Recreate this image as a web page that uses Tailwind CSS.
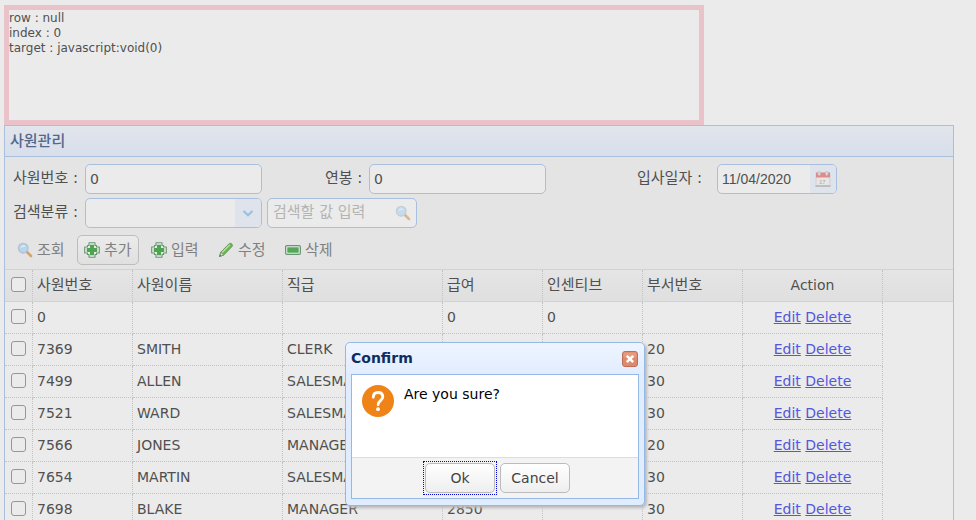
<!DOCTYPE html>
<html lang="ko">
<head>
<meta charset="utf-8">
<meta name="viewport" content="width=device-width, initial-scale=1">
<title>사원관리</title>
<script src="https://cdn.jsdelivr.net/npm/@tailwindcss/browser@4"></script>
</head>
<body class="relative h-screen overflow-hidden bg-[#ebebeb] pl-1 pr-[22px] pt-[5px] font-[family-name:'DejaVu_Sans','Noto_Sans_CJK_KR',sans-serif] text-sm text-[#505050]">

<svg class="hidden" aria-hidden="true">
  <defs>
    <symbol id="search" viewBox="0 0 16 16">
      <path d="M10 10l4 4" stroke="#d8a465" stroke-width="2.6" stroke-linecap="round"/>
      <path d="M9.4 9.4l1.5 1.5" stroke="#aaa" stroke-width="2"/>
      <circle cx="6.2" cy="6.2" r="4.8" fill="#b5d6ed" stroke="#b4bfce" stroke-width="1.3"/>
      <path d="M3.4 5.8a3 3 0 0 1 5.4-1.2c-1.5.2-3.4.6-5.4 1.2z" fill="#dcebf5"/>
    </symbol>
    <symbol id="add" viewBox="0 0 16 16">
      <path d="M5 .7h6v2.8h1.5v1.5h2.8v6h-2.8v1.5H11v2.8H5v-2.8H3.5V11H.7V5h2.8V3.5H5z" fill="#e5eee5" stroke="#689474" stroke-width="1.1" stroke-linejoin="round"/>
      <path d="M6 2.8h4V6h3.2v4H10v3.2H6V10H2.8V6H6z" fill="#4fa452"/>
    </symbol>
    <symbol id="edit" viewBox="0 0 16 16">
      <path d="M1.5 14.5l1.3-4.3 8-8.2c1-1 2.7-.7 3.2.2.6.8.5 1.8-.2 2.5l-8 8.2z" fill="#69bd4f" stroke="#648e64" stroke-width="1"/>
      <path d="M4 10.5l7.7-7.8" stroke="#b7df92" stroke-width="1.4"/>
      <path d="M2.8 10.4l3 2.7-4.3 1.4z" fill="#d8e2ce" stroke="#648e64" stroke-width=".7"/>
      <path d="M1.5 14.5l.6-1.8 1.2 1.1z" fill="#456f4b"/>
    </symbol>
    <symbol id="remove" viewBox="0 0 16 16">
      <rect x=".6" y="3.6" width="14.8" height="8.8" rx="1.3" fill="#e5eee5" stroke="#689474" stroke-width="1.2"/>
      <rect x="2.3" y="5.3" width="11.4" height="5.4" fill="#55a757"/>
    </symbol>
  </defs>
</svg>

<section class="h-[120px] max-w-[700px] border-[5px] border-[#eac3ca] pt-px text-xs leading-[15px]">
  <p>row : null</p>
  <p>index : 0</p>
  <p>target : javascript:void(0)</p>
</section>

<main class="border border-[#a9bfde]">
  <h1 class="flex h-[31px] items-center border-b border-[#a9bfde] bg-linear-to-b from-[#e1e5ec] to-[#d8dfeb] px-[5px] pt-0.5 text-[15px] font-medium text-[#52678b]">사원관리</h1>

  <div class="border-b border-[#d2d2d2] bg-[#e4e4e4] pb-1 pt-[7px]">
    <form>
      <div class="flex items-center pl-2">
        <label for="empno" class="w-[72px] whitespace-nowrap text-[15px]">사원번호 :</label>
        <input id="empno" value="0" class="h-[30px] w-[177px] rounded-[5px] border border-[#a9bfde] bg-[#ebebeb] px-1">
        <label for="sal" class="ml-[63px] w-11 whitespace-nowrap text-[15px]">연봉 :</label>
        <input id="sal" value="0" class="h-[30px] w-[177px] rounded-[5px] border border-[#a9bfde] bg-[#ebebeb] px-1">
        <label for="hired" class="ml-[91px] w-20 whitespace-nowrap text-[15px]">입사일자 :</label>
        <div class="flex h-[30px] w-[120px] overflow-hidden rounded-[5px] border border-[#a9bfde] bg-[#ebebeb]">
          <input id="hired" value="11/04/2020" class="min-w-0 flex-1 px-1 font-[family-name:'Liberation_Sans',sans-serif]">
          <button type="button" aria-label="날짜 선택" class="flex w-[26px] items-center justify-center bg-[#dfe4ec]">
            <svg class="size-4" viewBox="0 0 16 16">
              <rect x="1" y="2" width="14" height="13" fill="#e6e6e6" stroke="#cfcfcf"/>
              <rect x="1" y="1.5" width="14" height="5" fill="#df8b8b"/>
              <path d="M.5 15h15" stroke="#b5b5b5" stroke-width="1.5"/>
              <g fill="#e2dede" stroke="#c2b4b4" stroke-width=".7"><rect x="3" y="0.4" width="2.4" height="4" rx="1.2"/><rect x="10.6" y="0.4" width="2.4" height="4" rx="1.2"/></g>
              <text x="4" y="12.5" class="font-[family-name:'Liberation_Sans',sans-serif] text-[6px]" fill="#aaa">17</text>
            </svg>
          </button>
        </div>
      </div>
      <div class="mt-1 flex items-center pl-2">
        <label for="kind" class="w-[72px] whitespace-nowrap text-[15px]">검색분류 :</label>
        <div class="relative h-[30px] w-[177px] overflow-hidden rounded-[5px] border border-[#a9bfde] bg-[#ebebeb]">
          <select id="kind" class="h-full w-full appearance-none px-1"><option></option></select>
          <span class="pointer-events-none absolute inset-y-0 right-0 flex w-[26px] items-center justify-center bg-[#dfe4ec]">
            <svg class="size-4" viewBox="0 0 16 16"><path d="M3.5 6l4.5 4.3L12.5 6" fill="none" stroke="#94c2df" stroke-width="2.2"/></svg>
          </span>
        </div>
        <div class="ml-[5px] flex h-[30px] w-[150px] items-center rounded-[5px] border border-[#a9bfde] bg-[#ebebeb] pr-[5px]">
          <input aria-label="검색할 값 입력" placeholder="검색할 값 입력" class="min-w-0 flex-1 px-[5px] text-[15px] placeholder:text-[#b4b4b4]">
          <button type="button" aria-label="검색" class="opacity-70"><svg class="size-4"><use href="#search"/></svg></button>
        </div>
      </div>
    </form>
    <div class="mt-[7px] flex gap-1 pl-[6px] text-[15px] text-[#808080]">
      <button class="flex h-[30px] w-[62px] items-center gap-1 rounded-[5px] border border-transparent px-[5px]"><svg class="size-4 shrink-0"><use href="#search"/></svg><span class="whitespace-nowrap pt-0.5">조회</span></button>
      <button class="flex h-[30px] w-[62px] items-center gap-1 rounded-[5px] border border-[#bdbdbd] bg-linear-to-b from-[#ebebeb] to-[#e0e0e0] px-[6px]"><svg class="size-4 shrink-0"><use href="#add"/></svg><span class="whitespace-nowrap pt-0.5">추가</span></button>
      <button class="flex h-[30px] w-16 items-center gap-1 rounded-[5px] border border-transparent px-[7px]"><svg class="size-4 shrink-0"><use href="#add"/></svg><span class="whitespace-nowrap pt-0.5">입력</span></button>
      <button class="flex h-[30px] w-[62px] items-center gap-1 rounded-[5px] border border-transparent px-[6px]"><svg class="size-4 shrink-0"><use href="#edit"/></svg><span class="whitespace-nowrap pt-0.5">수정</span></button>
      <button class="flex h-[30px] w-16 items-center gap-1 rounded-[5px] border border-transparent px-[7px]"><svg class="size-4 shrink-0"><use href="#remove"/></svg><span class="whitespace-nowrap pt-0.5">삭제</span></button>
    </div>
  </div>

  <table class="w-full table-fixed border-separate border-spacing-0 text-left">
    <colgroup>
      <col class="w-7"><col class="w-[100px]"><col class="w-[150px]"><col class="w-[160px]"><col class="w-[100px]"><col class="w-[100px]"><col class="w-[100px]"><col class="w-[140px]"><col>
    </colgroup>
    <thead class="bg-linear-to-b from-[#e5e5e5] to-[#dfdfdf] text-[15px] [&_th]:h-8 [&_th]:border-b [&_th]:border-b-[#d2d2d2] [&_th]:px-1 [&_th]:font-normal [&_th:not(:last-child)]:border-r [&_th:not(:last-child)]:[border-right-style:dotted] [&_th:not(:last-child)]:border-r-[#c3c3c3]">
      <tr>
        <th class="pb-0.5"><input type="checkbox" aria-label="전체 선택" class="ml-[2px] block size-[15px] appearance-none rounded-[3px] border border-[#969696] bg-[#ebebeb]"></th>
        <th>사원번호</th><th>사원이름</th><th>직급</th><th>급여</th><th>인센티브</th><th>부서번호</th><th class="pb-0.5 text-center text-sm">Action</th><th></th>
      </tr>
    </thead>
    <tbody id="rows"></tbody>
  </table>
</main>

<div role="dialog" aria-labelledby="dlg-title" class="absolute left-[345px] top-[342px] w-[300px] rounded-[5px] border border-[#95b8e7] bg-linear-to-b from-[#eff5ff] to-[#e0ecff] to-20% px-[5px] pb-[6px] shadow-[2px_2px_3px_#b8b8b8]">
  <div class="flex h-[31px] items-center justify-between pr-px">
    <h2 id="dlg-title" class="pb-0.5 font-bold text-[#0e2d5f]">Confirm</h2>
    <button aria-label="닫기">
      <svg class="size-4" viewBox="0 0 16 16">
        <rect x=".5" y=".5" width="15" height="15" rx="2.5" fill="#dd8a6c" stroke="#bd6e5b"/>
        <path d="M1.5 2.5a1 1 0 0 1 1-1h11a1 1 0 0 1 1 1v4h-13z" fill="#e89b7b"/>
        <path d="M4.8 4.8l6.4 6.4M11.2 4.8l-6.4 6.4" stroke="#fff" stroke-width="2.5"/>
      </svg>
    </button>
  </div>
  <div class="border border-[#95b8e7] bg-white">
    <div class="flex h-[82px] gap-[10px] p-[10px] text-black">
      <svg class="size-8 shrink-0" viewBox="0 0 32 32">
        <circle cx="16" cy="16" r="16" fill="#f08318"/>
        <path d="M11.3 12.3c0-3 2-4.8 4.8-4.8 2.900 0 4.700 1.700 4.700 4.300 0 3.900-4.700 3.900-4.700 8" fill="none" stroke="#fff" stroke-width="2.800" stroke-linecap="round"/>
        <circle cx="16" cy="24.200" r="1.900" fill="#fff"/>
      </svg>
      <p class="leading-[18px]">Are you sure?</p>
    </div>
    <div class="flex h-[41px] items-center justify-center gap-[3px] border-t border-[#ddd] bg-[#f3f3f3] pl-[3px]">
      <div class="border border-dotted border-[#0000dd] p-px">
        <button class="block h-[30px] w-[70px] rounded-[5px] border border-[#bbb] bg-linear-to-b from-white to-[#eee] text-[#444]">Ok</button>
      </div>
      <button class="h-[30px] w-[70px] rounded-[5px] border border-[#bbb] bg-linear-to-b from-white to-[#eee] text-[#444]">Cancel</button>
    </div>
  </div>
</div>

<script>
  // Columns: number, name, job, salary, incentive, department
  const employees = [
    ['0', '', '', '0', '0', ''],
    ['7369', 'SMITH', 'CLERK', '', '', '20'],
    ['7499', 'ALLEN', 'SALESMAN', '', '', '30'],
    ['7521', 'WARD', 'SALESMAN', '', '', '30'],
    ['7566', 'JONES', 'MANAGER', '', '', '20'],
    ['7654', 'MARTIN', 'SALESMAN', '', '', '30'],
    ['7698', 'BLAKE', 'MANAGER', '2850', '', '30'],
  ];
  const cell = 'h-8 border-r border-b border-dotted border-[#c3c3c3] px-1 pb-0.5';
  document.getElementById('rows').innerHTML = employees.map(e => `<tr>
    <td class="${cell}"><input type="checkbox" aria-label="${e[0]} 선택" class="ml-[2px] block size-[15px] appearance-none rounded-[3px] border border-[#969696] bg-[#ebebeb]"></td>
    ${e.map(v => `<td class="${cell}">${v}</td>`).join('')}
    <td class="${cell} text-center text-[#5555e0]"><a href="#" class="underline">Edit</a> <a href="#" class="underline">Delete</a></td>
    <td></td></tr>`).join('');
</script>
</body>
</html>
